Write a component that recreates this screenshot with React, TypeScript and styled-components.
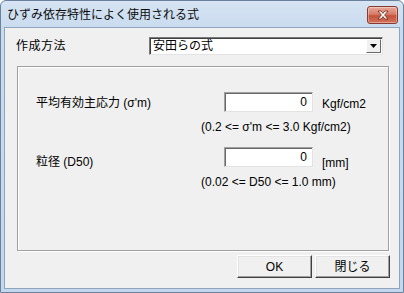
import React from "react";
import styled, { createGlobalStyle } from "styled-components";

const GlobalStyle = createGlobalStyle`
    html, body {
        margin: 0;
        padding: 0;
        background: #ffffff;
    }
    body {
        font-family: "Liberation Sans", "Noto Sans CJK JP", sans-serif;
        font-size: 12px;
        color: #000000;
    }
`;

type FieldProps = {
    label: string;
    value: string;
    unit: string;
    range: string;
    textDrop: number;
};

type DropProps = {
    $drop: number;
};

const fields: FieldProps[] = [
    {
        label: "平均有効主応力 (σ'm)",
        value: "0",
        unit: "Kgf/cm2",
        range: "(0.2 <= σ'm <= 3.0 Kgf/cm2)",
        textDrop: 3,
    },
    {
        label: "粒径 (D50)",
        value: "0",
        unit: "[mm]",
        range: "(0.02 <= D50 <= 1.0 mm)",
        textDrop: 7,
    },
];

const CloseGlyph = () => (
    <svg width="14" height="10" viewBox="0 0 14 10">
        <path
            d="M2 1 L5 1 L7 3.4 L9 1 L12 1 L8.6 5 L12 9 L9 9 L7 6.6 L5 9 L2 9 L5.4 5 Z"
            fill="#ffffff"
            stroke="#6b2418"
            strokeWidth="0.8"
            strokeLinejoin="round"
        />
    </svg>
);

const Arrow = () => (
    <svg width="7" height="4" viewBox="0 0 7 4">
        <path d="M0 0 L7 0 L3.5 4 Z" fill="#000000" />
    </svg>
);

const Field = (props: FieldProps) => {
    const { label, value, unit, range, textDrop } = props;
    return (
        <FieldBlock>
            <FieldRow>
                <FieldLabel $drop={textDrop}>{label}</FieldLabel>
                <NumberBox>{value}</NumberBox>
                <Unit $drop={textDrop}>{unit}</Unit>
            </FieldRow>
            <Range>{range}</Range>
        </FieldBlock>
    );
};

export default function App() {
    return (
        <>
            <GlobalStyle />
            <Window>
                <TitleBar>
                    <Title>ひずみ依存特性によく使用される式</Title>
                    <CloseButton>
                        <CloseGlyph />
                    </CloseButton>
                </TitleBar>
                <Client>
                    <MethodRow>
                        <MethodLabel>作成方法</MethodLabel>
                        <Combo>
                            <ComboText>安田らの式</ComboText>
                            <ComboButton>
                                <Arrow />
                            </ComboButton>
                        </Combo>
                    </MethodRow>
                    <Panel>
                        {fields.map((f, index) => (
                            <Field key={index} {...f} />
                        ))}
                    </Panel>
                    <Footer>
                        <PushButton>OK</PushButton>
                        <PushButton>閉じる</PushButton>
                    </Footer>
                </Client>
            </Window>
        </>
    );
}

const Window = styled.div`
    width: 404px;
    height: 293px;
    box-sizing: border-box;
    border: 1px solid #6a829e;
    border-radius: 6px 6px 0 0;
    background: linear-gradient(to bottom, #d6e4f3 0px, #c9dbef 28px, #c4d7ed 100%);
    display: flex;
    flex-direction: column;
    overflow: hidden;
`;

const TitleBar = styled.div`
    height: 26px;
    display: flex;
    align-items: flex-start;
    justify-content: space-between;
    padding: 0 5px 0 6px;
`;

const Title = styled.div`
    margin-top: 5px;
    font-size: 12px;
    line-height: 18px;
    color: #0d0d0d;
`;

const CloseButton = styled.div`
    margin-top: 5px;
    width: 29px;
    height: 16px;
    border: 1px solid #8a3a2c;
    border-radius: 3px;
    background: linear-gradient(to bottom, #e9a99c 0%, #d77c68 45%, #c4523a 55%, #d2735c 100%);
    box-shadow: inset 0 0 0 1px rgba(255, 255, 255, 0.35);
    display: flex;
    align-items: center;
    justify-content: center;
`;

const Client = styled.div`
    flex: 1;
    margin: 0 3px 3px 3px;
    border: 1px solid #8ea4bf;
    background: #f0f0f0;
    display: flex;
    flex-direction: column;
    padding: 0 0 0 11px;
`;

const MethodRow = styled.div`
    display: flex;
    align-items: center;
    margin-top: 9px;
    height: 18px;
`;

const MethodLabel = styled.div`
    width: 133px;
    line-height: 18px;
    letter-spacing: 0.5px;
`;

const Combo = styled.div`
    width: 234px;
    height: 18px;
    box-sizing: border-box;
    border-style: solid;
    border-width: 1px;
    border-color: #7a7a7a #e3e3e3 #e3e3e3 #7a7a7a;
    box-shadow: inset 1px 1px 0 #404040;
    background: #ffffff;
    display: flex;
    align-items: center;
    justify-content: space-between;
    padding: 0 1px 0 3px;
`;

const ComboText = styled.div`
    line-height: 16px;
`;

const ComboButton = styled.div`
    width: 13px;
    height: 12px;
    border-style: solid;
    border-width: 1px;
    border-color: #ffffff #696969 #696969 #ffffff;
    background: #f0f0f0;
    display: flex;
    align-items: center;
    justify-content: center;
`;

const Panel = styled.div`
    margin: 11px 0 0 1px;
    width: 372px;
    height: 185px;
    box-sizing: border-box;
    border: 1px solid #a0a0a0;
    box-shadow: 1px 1px 0 #ffffff, inset 1px 1px 0 #ffffff;
    padding: 25px 0 0 18px;
    display: flex;
    flex-direction: column;
    gap: 12px;
`;

const FieldBlock = styled.div`
    display: flex;
    flex-direction: column;
    gap: 7px;
`;

const FieldRow = styled.div`
    display: flex;
    align-items: flex-start;
    height: 20px;
`;

const FieldLabel = styled.div<DropProps>`
    width: 188px;
    line-height: 16px;
    padding-top: ${(props) => props.$drop}px;
`;

const NumberBox = styled.div`
    width: 89px;
    height: 20px;
    box-sizing: border-box;
    border-style: solid;
    border-width: 1px;
    border-color: #a0a0a0 #e3e3e3 #e3e3e3 #a0a0a0;
    box-shadow: inset 1px 1px 0 #696969;
    background: #ffffff;
    text-align: right;
    padding: 0 5px 0 0;
    line-height: 18px;
`;

const Unit = styled.div<DropProps>`
    margin-left: 9px;
    line-height: 16px;
    padding-top: ${(props) => props.$drop + 1}px;
`;

const Range = styled.div`
    padding-left: 165px;
    line-height: 16px;
`;

const Footer = styled.div`
    display: flex;
    justify-content: flex-end;
    gap: 3px;
    margin: 4px 9px 0 0;
`;

const PushButton = styled.div`
    width: 75px;
    height: 23px;
    box-sizing: border-box;
    border-style: solid;
    border-width: 1px;
    border-color: #ffffff #404040 #404040 #ffffff;
    box-shadow: inset -1px -1px 0 #a0a0a0, inset 1px 1px 0 #e3e3e3;
    background: #f0f0f0;
    display: flex;
    align-items: center;
    justify-content: center;
    line-height: 16px;
`;
